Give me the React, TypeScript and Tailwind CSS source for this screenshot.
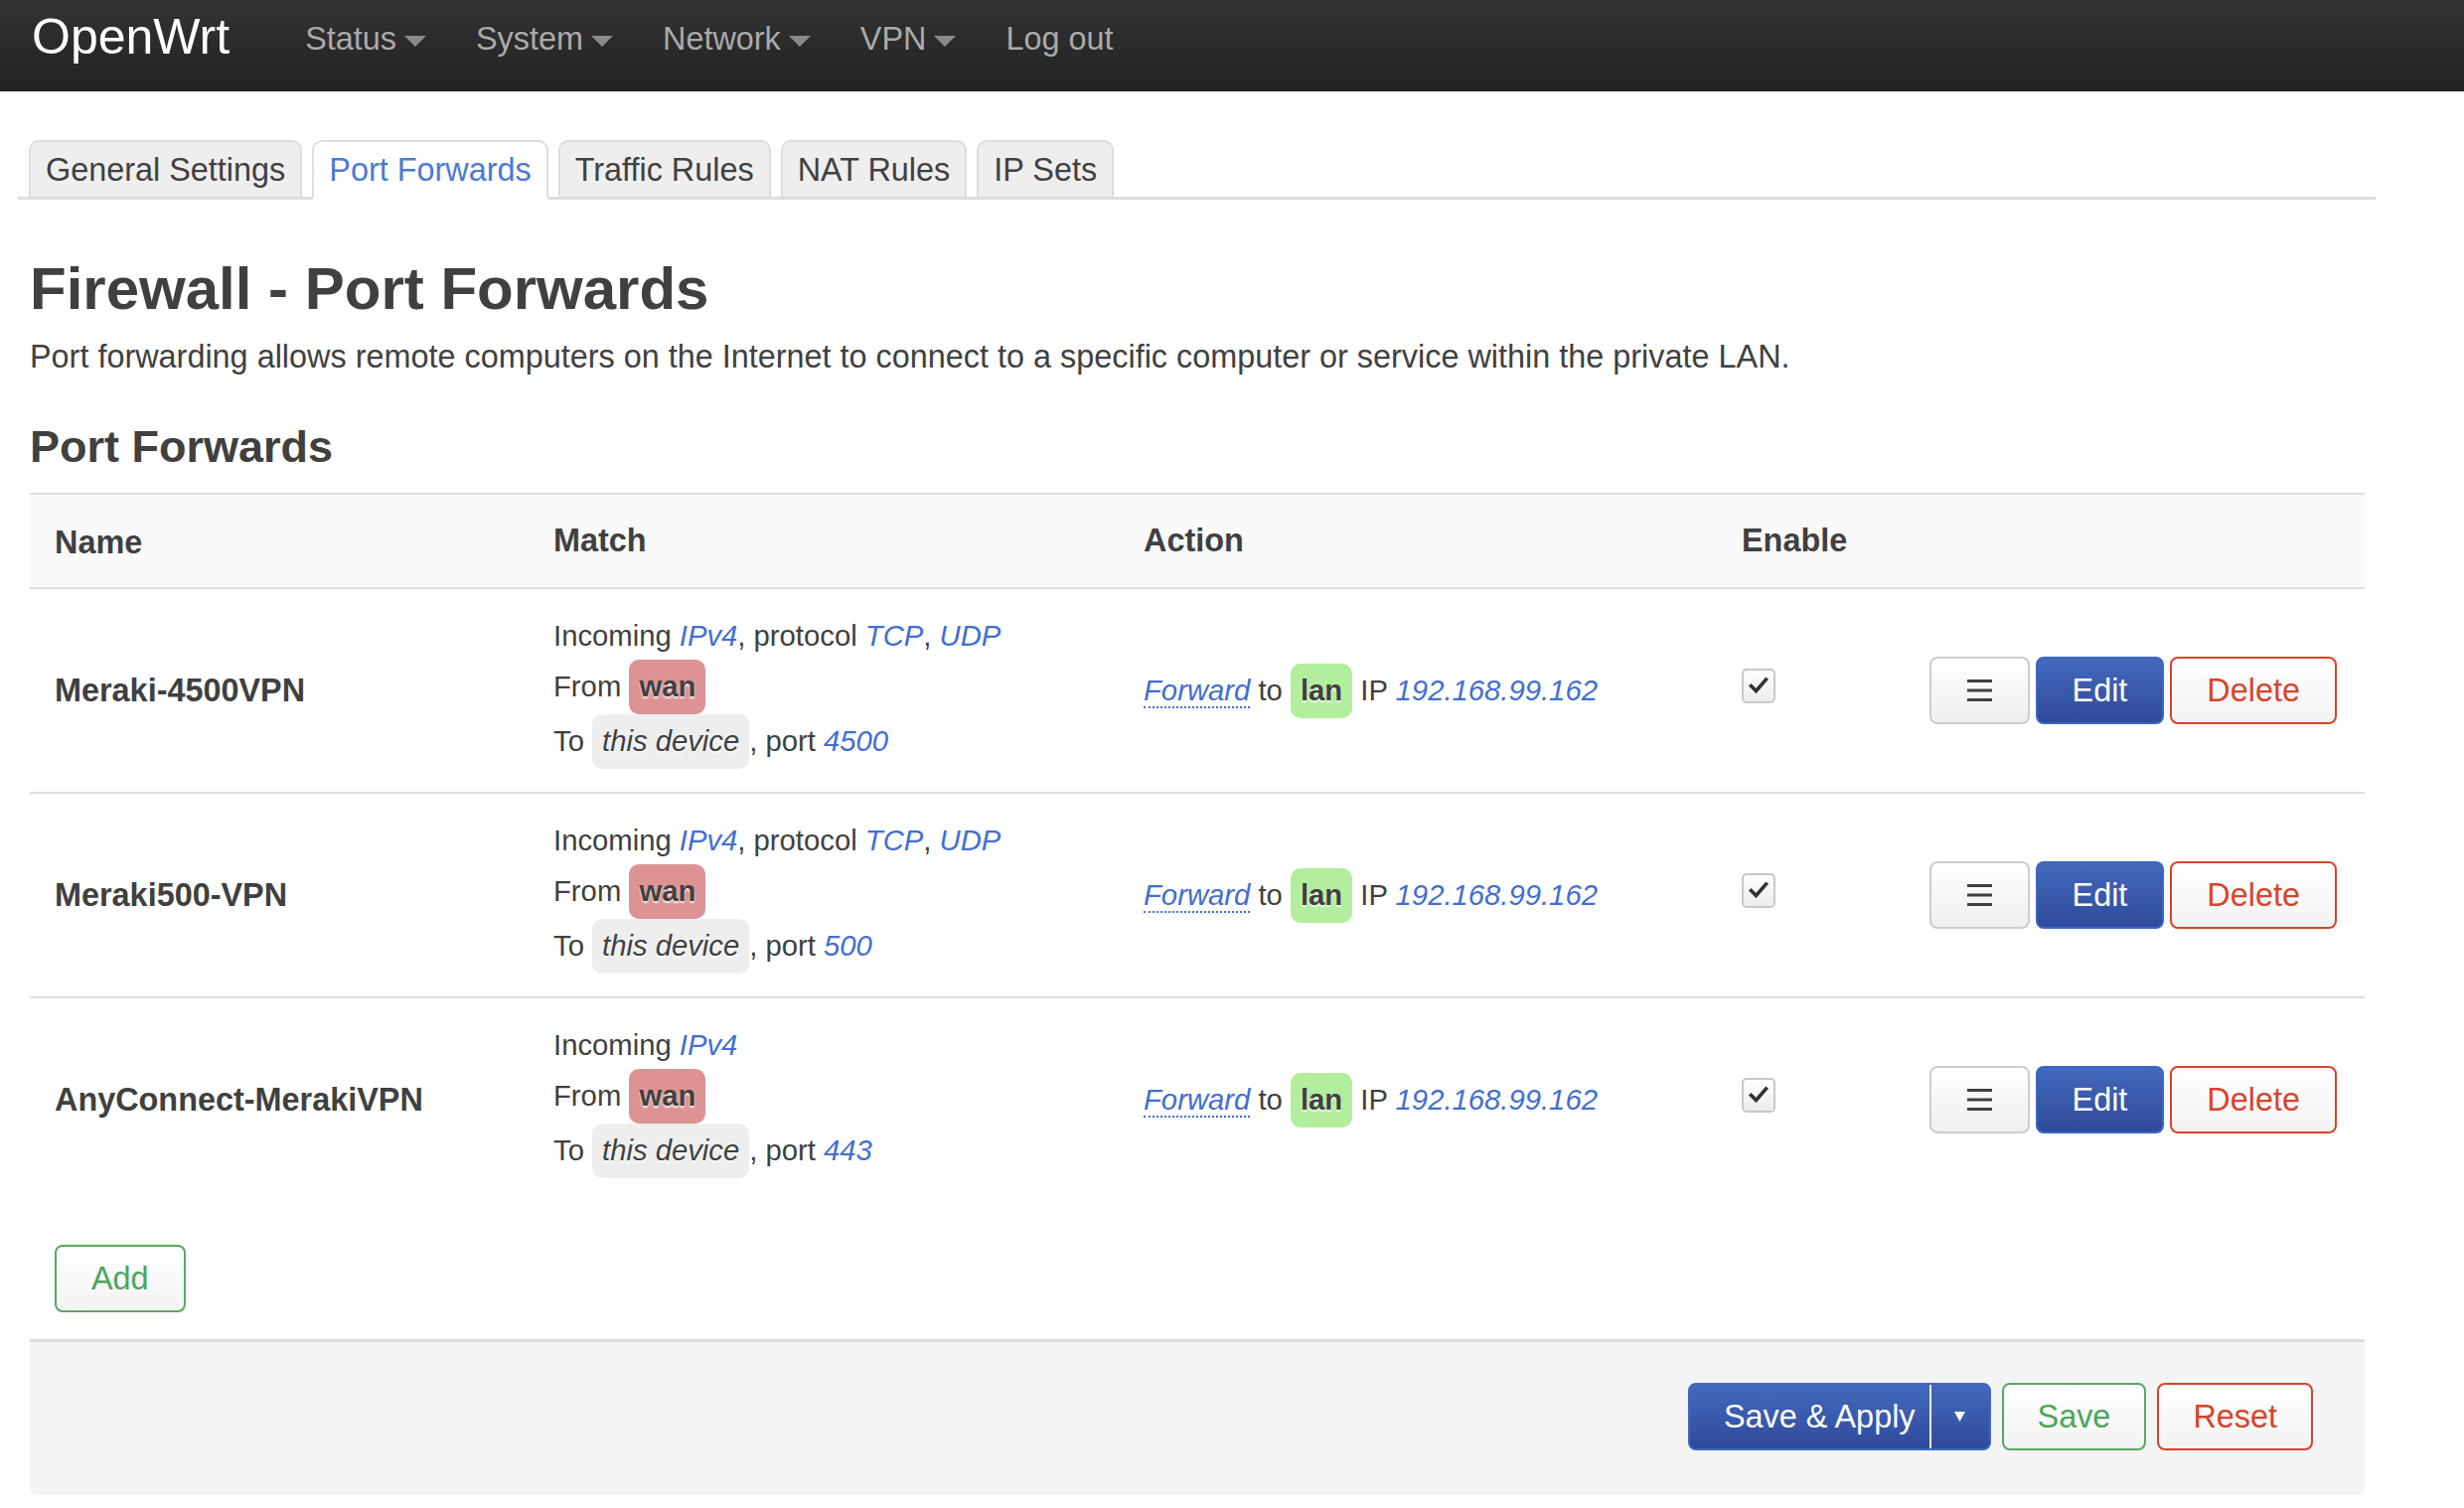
import React from "react";

const LINK = "text-[#426ed2] italic";
const BTN = "h-[68px] rounded-[8px] border-2 text-[32.4px] leading-none flex items-center justify-center";

function Caret() {
  return (
    <svg width="22" height="11" viewBox="0 0 22 11" className="mt-[4px]">
      <path d="M0 0H22L11 11Z" fill="#8a8a8a" />
    </svg>
  );
}

function NavItem({ label, caret }: { label: string; caret?: boolean }) {
  return (
    <span className="inline-flex items-center gap-[8px] text-[32.4px] leading-none text-[#ababab] [text-shadow:0_-1px_0_rgba(0,0,0,0.25)]">
      {label}
      {caret && <Caret />}
    </span>
  );
}

function Tab({ label, active }: { label: string; active?: boolean }) {
  return (
    <li
      className={
        active
          ? "-mb-[3px] rounded-t-[10px] border-2 border-b-[3px] border-[#ddd] border-b-white bg-white px-[15px] pt-[10px] pb-[8px] text-[32.4px] leading-[37px] text-[#4a7ad4]"
          : "-mb-[3px] rounded-t-[10px] border-2 border-b-[3px] border-[#ddd] bg-[#eee] px-[15px] pt-[10px] pb-[8px] text-[32.4px] leading-[37px] text-[#404040]"
      }
    >
      {label}
    </li>
  );
}

function MenuIcon() {
  return (
    <svg width="25" height="22" viewBox="0 0 25 22">
      <rect x="0" y="0" width="25" height="3" fill="#404040" />
      <rect x="0" y="9.5" width="25" height="3" fill="#404040" />
      <rect x="0" y="19" width="25" height="3" fill="#404040" />
    </svg>
  );
}

function CheckBox() {
  return (
    <div className="mb-[10px] flex h-[35px] w-[34px] items-center justify-center rounded-[5px] border-2 border-[#c8c8c8] bg-linear-to-b from-white to-[#ececec]">
      <svg width="22" height="18" viewBox="0 0 22 18">
        <path d="M3.5 9.5 L8.5 14.5 L18.5 3" fill="none" stroke="#333" strokeWidth="3.6" strokeLinecap="square" />
      </svg>
    </div>
  );
}

type Row = { name: string; protos: boolean; port: string };

const rows: Row[] = [
  { name: "Meraki-4500VPN", protos: true, port: "4500" },
  { name: "Meraki500-VPN", protos: true, port: "500" },
  { name: "AnyConnect-MerakiVPN", protos: false, port: "443" },
];

const GRID = "grid grid-cols-[502px_594px_602px_170px_1fr]";

export default function App() {
  return (
    <div className="min-h-screen bg-white font-['Liberation_Sans',Arial,sans-serif] text-[#404040]">
      <header className="flex h-[92px] items-start bg-linear-to-b from-[#333333] to-[#222222] pl-[32px] pt-[12px]">
        <span className="text-[50px] leading-none text-white">OpenWrt</span>
        <nav className="ml-[76px] mt-[11px] flex items-center gap-[50px]">
          <NavItem label="Status" caret />
          <NavItem label="System" caret />
          <NavItem label="Network" caret />
          <NavItem label="VPN" caret />
          <NavItem label="Log out" />
        </nav>
      </header>

      <main className="pl-[30px] pr-[100px]">
        <ul className="-ml-[12px] -mr-[11px] mt-[49px] flex gap-[10px] border-b-[3px] border-[#ddd] pl-[11px]">
          <Tab label="General Settings" />
          <Tab label="Port Forwards" active />
          <Tab label="Traffic Rules" />
          <Tab label="NAT Rules" />
          <Tab label="IP Sets" />
        </ul>

        <h2 className="mt-[55px] text-[60px] font-bold leading-[69px]">Firewall - Port Forwards</h2>
        <p className="mt-[16px] text-[32.4px] leading-[37px]">
          Port forwarding allows remote computers on the Internet to connect to a specific computer or service within the private LAN.
        </p>
        <h3 className="mt-[46px] text-[45px] font-bold leading-[52px]">Port Forwards</h3>

        <div className="mt-[20px] border-t-2 border-[#ddd]">
          <div className={GRID + " h-[93px] items-center bg-[#f9f9f9] text-[32.4px] font-bold"}>
            <div className="pl-[25px] pt-[4px]">Name</div>
            <div className="pl-[25px]">Match</div>
            <div className="pl-[25px]">Action</div>
            <div className="pl-[25px]">Enable</div>
            <div />
          </div>

          {rows.map((r) => (
            <div key={r.name} className={GRID + " h-[206px] items-center border-t-2 border-[#ddd]"}>
              <div className="pl-[25px] text-[32.4px] font-bold">{r.name}</div>
              <div className="pl-[25px] text-[29.25px]">
                <div className="leading-[47px]">
                  Incoming <span className={LINK}>IPv4</span>
                  {r.protos && (
                    <>
                      , protocol <span className={LINK}>TCP</span>, <span className={LINK}>UDP</span>
                    </>
                  )}
                </div>
                <div className="leading-[55px]">
                  From{" "}
                  <span className="inline-block rounded-[10px] bg-[#dd9393] px-[10px] font-bold [text-shadow:0_2px_2px_rgba(255,255,255,0.85)]">
                    wan
                  </span>
                </div>
                <div className="leading-[55px]">
                  To{" "}
                  <span className="inline-block rounded-[10px] bg-[#eeeeee] px-[10px] italic [text-shadow:0_2px_2px_rgba(255,255,255,0.85)]">
                    this device
                  </span>
                  , port <span className={LINK}>{r.port}</span>
                </div>
              </div>
              <div className="pl-[25px] text-[29.25px] leading-[55px]">
                <span className="border-b-2 border-dotted border-[#426ed2] text-[#426ed2] italic">Forward</span> to{" "}
                <span className="inline-block rounded-[10px] bg-[#b2ee9c] px-[10px] font-bold [text-shadow:0_2px_2px_rgba(255,255,255,0.85)]">
                  lan
                </span>{" "}
                IP <span className={LINK}>192.168.99.162</span>
              </div>
              <div className="flex items-center pl-[25px]">
                <CheckBox />
              </div>
              <div className="flex justify-end gap-[6px] pr-[28px]">
                <button className={BTN + " border-[#cccccc] bg-linear-to-b from-white to-[#efefef] px-[36px]"}>
                  <MenuIcon />
                </button>
                <button className={BTN + " border-[#3b66c4] bg-linear-to-b from-[#4469bd] to-[#2f4a9b] px-[35px] text-white"}>
                  Edit
                </button>
                <button className={BTN + " border-[#d8432b] bg-linear-to-b from-white to-[#f3f3f3] px-[35px] text-[#d8432b]"}>
                  Delete
                </button>
              </div>
            </div>
          ))}
        </div>

        <div className="pl-[25px] pt-[44px] pb-[27px]">
          <button className={BTN + " border-[#5aa764] bg-linear-to-b from-white to-[#f3f3f3] px-[35px] text-[#4da55a]"}>
            Add
          </button>
        </div>

        <div className="flex justify-end gap-[11px] rounded-b-[8px] border-t-[3px] border-[#ddd] bg-[#f4f4f4] pt-[41px] pb-[45px] pr-[52px]">
          <div className={BTN + " border-[#3b66c4] bg-linear-to-b from-[#4469bd] to-[#2f4a9b] text-white"}>
            <span className="pl-[34px] pr-[14px]">Save &amp; Apply</span>
            <span className="h-full w-[2px] bg-white/90" />
            <span className="flex w-[58px] items-center justify-center">
              <svg width="11" height="10" viewBox="0 0 11 10">
                <path d="M0 0H11L5.5 10Z" fill="#fff" />
              </svg>
            </span>
          </div>
          <button className={BTN + " border-[#5aa764] bg-linear-to-b from-white to-[#f3f3f3] px-[34px] text-[#4da55a]"}>
            Save
          </button>
          <button className={BTN + " border-[#d8432b] bg-linear-to-b from-white to-[#f3f3f3] px-[34px] text-[#d8432b]"}>
            Reset
          </button>
        </div>
      </main>
    </div>
  );
}
